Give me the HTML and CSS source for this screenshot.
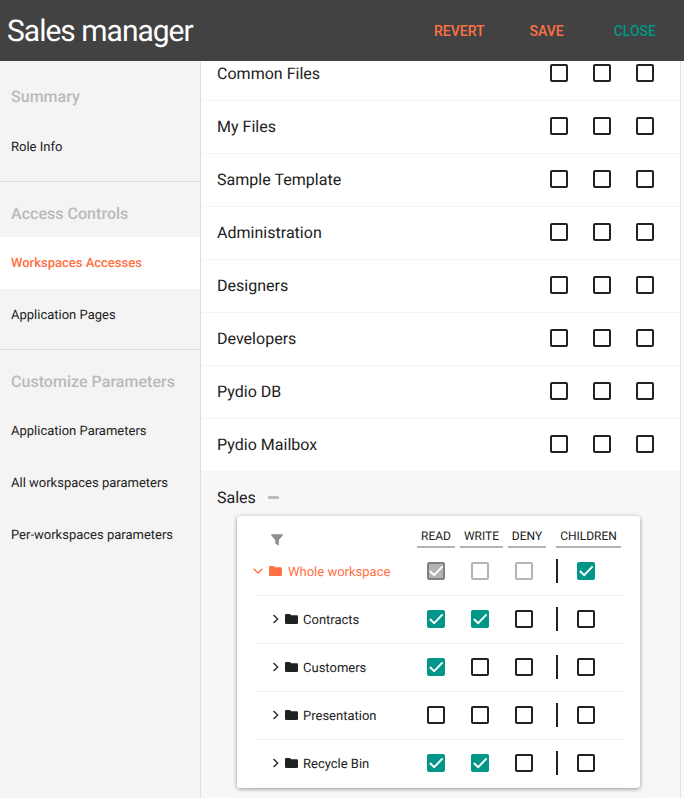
FILE: index.html
```html
<!DOCTYPE html>
<html lang="en">
<head>
<meta charset="utf-8">
<title>Sales manager</title>
<link rel="stylesheet" href="styles.css">
</head>
<body>
<svg class="defs" aria-hidden="true">
  <symbol id="check" viewBox="0 0 18 18"><path d="M2.8 9 L7.2 13.2 L15.6 4.4" fill="none" stroke="#fff" stroke-width="2"/></symbol>
  <symbol id="folder" viewBox="0 0 13 10"><path d="M1.3 0H4.4Q5.2 0 5.7.7Q6.1 1.3 6.9 1.3H11.7Q13 1.3 13 2.6V8.7Q13 10 11.7 10H1.3Q0 10 0 8.7V1.2Q0 0 1.3 0Z" fill="currentColor"/></symbol>
  <symbol id="right" viewBox="0 0 6 10"><path d="M.5 1 4.7 5 .5 9" fill="none" stroke="currentColor" stroke-width="1.3"/></symbol>
</svg>
<header class="topbar">
  <h1 class="title">Sales manager</h1>
  <nav class="actions">
    <button class="action revert">REVERT</button>
    <button class="action save">SAVE</button>
    <button class="action close">CLOSE</button>
  </nav>
</header>
<div class="body">
  <aside class="sidebar">
    <section class="group first">
      <h2 class="heading">Summary</h2>
      <a class="item">Role Info</a>
    </section>
    <section class="group">
      <h2 class="heading">Access Controls</h2>
      <a class="item active">Workspaces Accesses</a>
      <a class="item">Application Pages</a>
    </section>
    <section class="group">
      <h2 class="heading">Customize Parameters</h2>
      <a class="item">Application Parameters</a>
      <a class="item">All workspaces parameters</a>
      <a class="item">Per-workspaces parameters</a>
    </section>
  </aside>
  <main class="main">
    <div class="row"><span class="name">Common Files</span><i class="box"></i><i class="box"></i><i class="box"></i></div>
    <div class="row"><span class="name">My Files</span><i class="box"></i><i class="box"></i><i class="box"></i></div>
    <div class="row"><span class="name">Sample Template</span><i class="box"></i><i class="box"></i><i class="box"></i></div>
    <div class="row"><span class="name">Administration</span><i class="box"></i><i class="box"></i><i class="box"></i></div>
    <div class="row"><span class="name">Designers</span><i class="box"></i><i class="box"></i><i class="box"></i></div>
    <div class="row"><span class="name">Developers</span><i class="box"></i><i class="box"></i><i class="box"></i></div>
    <div class="row"><span class="name">Pydio DB</span><i class="box"></i><i class="box"></i><i class="box"></i></div>
    <div class="row last"><span class="name">Pydio Mailbox</span><i class="box"></i><i class="box"></i><i class="box"></i></div>
    <section class="sales">
      <div class="sales-head"><span>Sales</span><i class="dash"></i></div>
      <div class="card">
        <div class="cols head">
          <svg class="filter" viewBox="0 0 12 12"><path d="M.3.3H11.7V1.6L7.8 5.9V11.7L4.3 9.4V5.9L.3 1.6Z" fill="#8e8e8e"/></svg>
          <span class="col">READ</span><span class="col">WRITE</span><span class="col">DENY</span><span class="col">CHILDREN</span>
        </div>
        <div class="cols tree root">
          <div class="label"><svg class="down" viewBox="0 0 10 6"><path d="M.7.7 5 5 9.3.7" fill="none" stroke="currentColor" stroke-width="1.3"/></svg><svg class="folder"><use href="#folder"/></svg><span>Whole workspace</span></div>
          <i class="box inherited"><svg><use href="#check"/></svg></i><i class="box muted"></i><i class="box muted"></i>
          <div class="children"><i class="box on"><svg><use href="#check"/></svg></i></div>
        </div>
        <div class="cols tree">
          <div class="label"><svg class="right"><use href="#right"/></svg><svg class="folder"><use href="#folder"/></svg><span>Contracts</span></div>
          <i class="box on"><svg><use href="#check"/></svg></i><i class="box on"><svg><use href="#check"/></svg></i><i class="box"></i>
          <div class="children"><i class="box"></i></div>
        </div>
        <div class="cols tree">
          <div class="label"><svg class="right"><use href="#right"/></svg><svg class="folder"><use href="#folder"/></svg><span>Customers</span></div>
          <i class="box on"><svg><use href="#check"/></svg></i><i class="box"></i><i class="box"></i>
          <div class="children"><i class="box"></i></div>
        </div>
        <div class="cols tree">
          <div class="label"><svg class="right"><use href="#right"/></svg><svg class="folder"><use href="#folder"/></svg><span>Presentation</span></div>
          <i class="box"></i><i class="box"></i><i class="box"></i>
          <div class="children"><i class="box"></i></div>
        </div>
        <div class="cols tree">
          <div class="label"><svg class="right"><use href="#right"/></svg><svg class="folder"><use href="#folder"/></svg><span>Recycle Bin</span></div>
          <i class="box on"><svg><use href="#check"/></svg></i><i class="box on"><svg><use href="#check"/></svg></i><i class="box"></i>
          <div class="children"><i class="box"></i></div>
        </div>
      </div>
    </section>
  </main>
</div>
</body>
</html>
```

FILE: styles.css
```css
* { box-sizing: border-box; }
body {
  margin: 0;
  height: 798px;
  overflow: hidden;
  display: flex;
  flex-direction: column;
  font-family: Roboto, sans-serif;
  color: #212121;
  background: #fafafa;
  text-rendering: geometricPrecision;
}
svg { display: block; flex: none; }
.defs { display: none; }

.topbar {
  height: 61px;
  flex: none;
  display: flex;
  align-items: center;
  justify-content: space-between;
  padding: 0 28px 0 7px;
  background: #424242;
}
.title { margin: 0; padding-top: 2px; font-size: 30px; font-weight: 400; letter-spacing: -1px; color: #fff; }
.actions { display: flex; gap: 45px; }
.action {
  border: 0;
  padding: 0;
  background: none;
  font: 500 14px/20px Roboto, sans-serif;
  color: #ff7043;
}
.close { color: #009688; margin-left: 5px; }

.body { flex: 1; min-height: 0; display: flex; }
.sidebar {
  width: 201px;
  flex: none;
  background: #f4f4f4;
  border-right: 1px solid #dfdfdf;
}
.group { padding: 8px 0; }
.group.first { padding-top: 12px; }
.group + .group { border-top: 1px solid #dfdfdf; }
.heading {
  margin: 0;
  padding-left: 11px;
  font-size: 16px;
  font-weight: 500;
  line-height: 48px;
  letter-spacing: 0.03px;
  color: #bababa;
}
.group + .group .heading { margin-bottom: -1px; }
.item {
  display: block;
  height: 52px;
  padding: 1px 0 0 11px;
  font-size: 13px;
  line-height: 52px;
}
.item.active { position: relative; background: #fff; color: #ff7043; font-weight: 500; }

.main {
  width: 480px;
  flex: none;
  display: flex;
  flex-direction: column;
  background: #fff;
  border-right: 1px solid #e4e4e4;
  overflow: hidden;
}
.row {
  height: 53px;
  flex: none;
  display: flex;
  align-items: center;
  gap: 25px;
  padding: 0 26px 2px 16px;
  border-bottom: 1px solid #f5f5f5;
}
.row:first-child { margin-top: -13px; }
.row.last { height: 52px; border-bottom: 0; }
.name { flex: 1; font-size: 16px; line-height: 20px; padding-top: 1px; letter-spacing: 0.02px; }
.box {
  width: 18px;
  height: 18px;
  flex: none;
  border: 2px solid #212121;
  border-radius: 2px;
}
.box svg { width: 18px; height: 18px; margin: -2px; }
.box.on { border-color: #009688; background: #009688; }
.box.muted { border-color: #b4b4b4; }
.box.inherited { border-color: #808080; background: #b3b3b3; }

.sales { flex: 1; min-height: 0; padding: 0 39px 0 36px; background: #f7f7f7; }
.sales-head {
  height: 45px;
  margin-left: -20px;
  padding-top: 8px;
  display: flex;
  align-items: center;
  gap: 12px;
  font-size: 16px;
}
.dash { width: 11px; height: 3px; border-radius: 1px; background: #bbb; }
.card {
  width: 403px;
  height: 272px;
  padding: 0 16px;
  border-radius: 3px;
  background: #fff;
  box-shadow: 0 1px 4px rgba(0, 0, 0, 0.4);
}
.cols { display: grid; align-items: center; }
/* column captions are separated by 5px, with a wider gap before the last one */
.head {
  grid-template-columns: 159px 38px 43px 38px 65px;
  column-gap: 5px;
  height: 32px;
  align-items: end;
}
.head .col:last-child { margin-left: 5px; margin-right: -5px; }
.col {
  height: 22px;
  line-height: 20px;
  border-bottom: 2px solid #b3b3b3;
  font-size: 12px;
  text-align: center;
}
.filter { width: 12px; height: 12px; margin: 0 0 2px 18px; }
.tree {
  grid-template-columns: 174px 44px 44px 41px 68px;
  height: 48px;
  padding-bottom: 1px;
  border-bottom: 1px solid #f3f3f3;
  font-size: 13px;
}
.tree:last-child { border-bottom-color: #f8f8f8; }
.label { display: flex; align-items: center; height: 20px; padding-left: 20px; line-height: 18px; }
.label span { padding-top: 4px; }
.root .label { padding-left: 0; color: #ff7043; }
.right { width: 6px; height: 10px; margin-right: 6px; }
.down { width: 10px; height: 6px; margin-right: 6px; }
.folder { width: 13px; height: 10px; margin-right: 5px; }
.root .folder { margin-right: 6px; }
.children { height: 24px; display: flex; align-items: center; padding-left: 19px; border-left: 2px solid #212121; }
```
